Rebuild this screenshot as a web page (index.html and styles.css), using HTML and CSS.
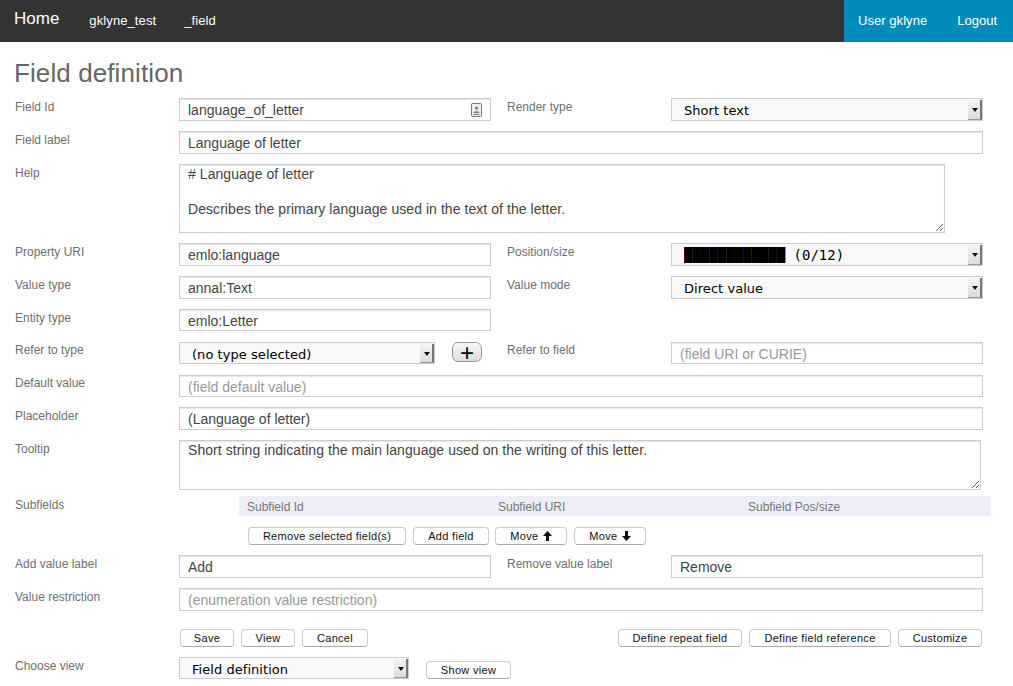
FILE: index.html
```html
<!DOCTYPE html>
<html lang="en">
<head>
  <meta charset="UTF-8" />
  <title>Field definition</title>
  <link rel="stylesheet" href="styles.css">
</head>
<body>
  <nav class="top-bar">
    <a class="home" href="#">Home</a>
    <a class="crumb" href="#">gklyne_test</a>
    <a class="crumb" href="#">_field</a>
    <div class="user-links">
      <a href="#">User gklyne</a>
      <a href="#">Logout</a>
    </div>
  </nav>

  <main class="page">
    <h1>Field definition</h1>

    <div class="row">
      <label>Field Id</label>
      <div class="id-box">
        <input type="text" value="language_of_letter" />
        <svg class="contact-icon" width="11" height="14" viewBox="0 0 11 14">
          <rect x="0.5" y="0.5" width="10" height="13" rx="1" fill="#eee" stroke="#777" />
          <circle cx="5.5" cy="5" r="1.5" fill="#777" />
          <path d="M2.5 10 C2.5 7.5 8.5 7.5 8.5 10 Z M2.5 11h6v1h-6z" fill="#777" />
        </svg>
      </div>
      <label class="right-label">Render type</label>
      <div class="select-box"><select><option>Short text</option></select><span class="arrow"></span></div>
    </div>

    <div class="row">
      <label>Field label</label>
      <input class="wide" type="text" value="Language of letter" />
    </div>

    <div class="row">
      <label>Help</label>
      <textarea class="wide help-text"># Language of letter

Describes the primary language used in the text of the letter.</textarea>
    </div>

    <div class="row">
      <label>Property URI</label>
      <input type="text" value="emlo:language" />
      <label class="right-label">Position/size</label>
      <div class="select-box"><select class="mono"><option>████████████ (0/12)</option></select><span class="arrow"></span></div>
    </div>

    <div class="row">
      <label>Value type</label>
      <input type="text" value="annal:Text" />
      <label class="right-label">Value mode</label>
      <div class="select-box"><select><option>Direct value</option></select><span class="arrow"></span></div>
    </div>

    <div class="row short">
      <label>Entity type</label>
      <input type="text" value="emlo:Letter" />
    </div>

    <div class="row short raised">
      <label>Refer to type</label>
      <div class="with-button">
        <div class="select-box type-select"><select><option>(no type selected)</option></select><span class="arrow"></span></div>
        <button class="plus-btn">+</button>
      </div>
      <label class="right-label">Refer to field</label>
      <input type="text" placeholder="(field URI or CURIE)" />
    </div>

    <div class="row short raised default-row">
      <label>Default value</label>
      <input class="wide" type="text" placeholder="(field default value)" />
    </div>

    <div class="row">
      <label>Placeholder</label>
      <input class="wide" type="text" value="(Language of letter)" />
    </div>

    <div class="row tooltip-row">
      <label>Tooltip</label>
      <textarea class="wide tooltip-text">Short string indicating the main language used on the writing of this letter.</textarea>
    </div>

    <div class="subfields">
      <label>Subfields</label>
      <div class="subfield-head">
        <span>Subfield Id</span>
        <span>Subfield URI</span>
        <span>Subfield Pos/size</span>
      </div>
    </div>

    <div class="subfield-buttons">
      <button class="btn-remove">Remove selected field(s)</button>
      <button class="btn-add">Add field</button>
      <button class="btn-move btn-up">Move
        <svg width="9" height="10" viewBox="0 0 9 10"><path d="M4.5 0 L9 5 H6 V10 H3 V5 H0 Z" fill="#111" /></svg>
      </button>
      <button class="btn-move">Move
        <svg width="9" height="10" viewBox="0 0 9 10"><path d="M4.5 10 L9 5 H6 V0 H3 V5 H0 Z" fill="#111" /></svg>
      </button>
    </div>

    <div class="row">
      <label>Add value label</label>
      <input type="text" value="Add" />
      <label class="right-label">Remove value label</label>
      <input type="text" value="Remove" />
    </div>

    <div class="row restriction-row">
      <label>Value restriction</label>
      <input class="wide" type="text" placeholder="(enumeration value restriction)" />
    </div>

    <div class="actions">
      <div class="actions-left">
        <button class="btn-save">Save</button>
        <button class="btn-view">View</button>
        <button class="btn-cancel">Cancel</button>
      </div>
      <div class="actions-right">
        <button class="btn-repeat">Define repeat field</button>
        <button class="btn-ref">Define field reference</button>
        <button class="btn-custom">Customize</button>
      </div>
    </div>

    <div class="choose-view">
      <label>Choose view</label>
      <div class="select-box view-select"><select><option>Field definition</option></select><span class="arrow"></span></div>
      <button class="btn-show">Show view</button>
    </div>
  </main>
</body>
</html>
```

FILE: styles.css
```css
body {
  margin: 0;
  font-family: "Liberation Sans", Arial, sans-serif;
  background-color: #fff;
}

/* top bar */
.top-bar {
  display: flex;
  align-items: center;
  height: 42px;
  background-color: #333;
  padding-left: 14px;
}
.top-bar a {
  color: #fff;
  text-decoration: none;
  font-size: 13px;
  letter-spacing: 0.1px;
  margin-top: -2px;
}
.top-bar .home {
  font-size: 17px;
  margin-right: 30px;
  margin-top: -4px;
  letter-spacing: 0;
}
.top-bar .crumb {
  margin-right: 28px;
}
.user-links {
  margin-left: auto;
  align-self: stretch;
  display: flex;
  align-items: center;
  gap: 30px;
  width: 169px;
  box-sizing: border-box;
  padding-left: 14px;
  background-color: #008cba;
}
.user-links a {
  letter-spacing: 0.05px;
}

/* form */
.page {
  padding: 0 15px;
}
h1 {
  margin: 0;
  height: 56px;
  box-sizing: border-box;
  padding-top: 16px;
  margin-left: -1px;
  font-size: 26px;
  line-height: 30px;
  letter-spacing: 0.1px;
  font-weight: normal;
  color: #666;
}
.row {
  display: grid;
  grid-template-columns: 164px 312px 16px 164px 312px;
  margin-bottom: 10px;
}
.row.short {
  margin-bottom: 11px;
}
.row.default-row {
  margin-bottom: 10px;
}
.row > label:first-child {
  grid-column: 1;
}
.right-label {
  grid-column: 4;
}
label {
  font-size: 12px;
  line-height: 16px;
  padding-top: 1px;
  color: #6f6f6f;
}
.raised label {
  padding-top: 0;
}
input[type="text"], textarea {
  box-sizing: border-box;
  width: 100%;
  border: 1px solid #ccc;
  box-shadow: inset 0 1px 1px rgba(0,0,0,0.1);
  font-family: "Liberation Sans", Arial, sans-serif;
  font-size: 14px;
  color: #444;
  background: #fff;
  margin: 0;
  outline: none;
}
input[type="text"] {
  height: 23px;
  padding: 1px 8px 0;
  grid-column: 2;
}
.row.short input[type="text"] {
  height: 22px;
}
.right-label + input[type="text"] {
  grid-column: 5;
}
input::placeholder {
  color: #999;
  opacity: 1;
}
input.wide, textarea.wide {
  grid-column: 2 / 6;
}
textarea {
  display: block;
  padding: 1px 8px 0;
  line-height: 17.5px;
  letter-spacing: 0.06px;
}
.help-text {
  height: 69px;
  width: 766px;
}
.tooltip-text {
  height: 50px;
  width: 802px;
}
.tooltip-row {
  margin-bottom: 6px;
}
.id-box {
  grid-column: 2;
  position: relative;
}
.contact-icon {
  position: absolute;
  right: 9px;
  top: 5px;
}

/* select with old style stepper */
.select-box {
  grid-column: 5;
  position: relative;
  height: 23px;
}
.row.short .select-box {
  height: 22px;
}
.select-box select {
  appearance: none;
  box-sizing: border-box;
  width: 100%;
  height: 100%;
  margin: 0;
  padding: 1px 20px 0 12px;
  border: 1px solid #ccc;
  border-radius: 0;
  background: #f9f9f9;
  font-family: "DejaVu Sans", sans-serif;
  font-size: 13px;
  letter-spacing: 0.05px;
  color: #000;
  outline: none;
}
.select-box select.mono {
  font-family: "DejaVu Sans Mono", monospace;
  font-size: 14px;
  letter-spacing: 0;
}
.type-select select, .view-select select {
  padding-top: 3px;
}
.arrow {
  position: absolute;
  right: 1px;
  top: 2px;
  bottom: 1px;
  width: 14px;
  box-sizing: border-box;
  background: linear-gradient(#f4f4f4, #dcdcdc);
  border-right: 2px solid #777;
  border-bottom: 1px solid #999;
}
.arrow::after {
  content: "";
  position: absolute;
  left: 4px;
  top: 8px;
  border-left: 3px solid transparent;
  border-right: 3px solid transparent;
  border-top: 4px solid #111;
}
.with-button {
  grid-column: 2;
  display: flex;
  gap: 17px;
}
.type-select {
  width: 256px;
}
.view-select {
  width: 230px;
}

/* buttons */
button {
  box-sizing: border-box;
  height: 18px;
  padding: 0;
  margin: 0;
  background: #fff;
  border: 1px solid #ccc;
  border-bottom-color: #aaa;
  border-radius: 4px;
  font-family: "Liberation Sans", Arial, sans-serif;
  font-size: 11px;
  letter-spacing: 0.3px;
  color: #111;
  cursor: pointer;
}
.plus-btn {
  width: 30px;
  height: 20px;
  border-radius: 6px;
  border-color: #999;
  background: linear-gradient(#f8f8f8, #ddd);
  font-size: 24px;
  line-height: 15px;
  letter-spacing: 0;
  color: #000;
}
.subfields {
  display: flex;
  margin-bottom: 11px;
}
.subfields label {
  width: 224px;
}
.subfield-head {
  display: grid;
  grid-template-columns: 251px 250px 251px;
  width: 752px;
  height: 20px;
  box-sizing: border-box;
  padding-left: 8px;
  flex-shrink: 0;
  background-color: #eeeef8;
  font-size: 12px;
  line-height: 23px;
  color: #777;
}
.subfield-buttons {
  display: flex;
  gap: 7px;
  margin: 0 0 10px 233px;
}
.btn-remove { width: 158px; }
.btn-add { width: 76px; }
.btn-move { width: 72px; }
.btn-up { margin-left: -1px; }
.btn-move svg { vertical-align: -1px; margin-left: 1px; }
.restriction-row {
  margin-bottom: 18px;
}
.actions {
  display: flex;
  justify-content: space-between;
  width: 967px;
  padding-left: 166px;
  box-sizing: border-box;
  margin-bottom: 10px;
}
.actions-left {
  margin-left: -1px;
}
.actions-left, .actions-right {
  display: flex;
  gap: 7px;
}
.btn-save { width: 54px; }
.btn-view { width: 54px; }
.btn-cancel { width: 66px; }
.btn-repeat { width: 124px; }
.btn-ref { width: 142px; }
.btn-custom { width: 84px; }
.choose-view {
  display: flex;
  align-items: flex-start;
}
.choose-view label {
  width: 164px;
}
.choose-view .select-box {
  height: 22px;
}
.btn-show {
  width: 85px;
  margin: 4px 0 0 17px;
}
```
